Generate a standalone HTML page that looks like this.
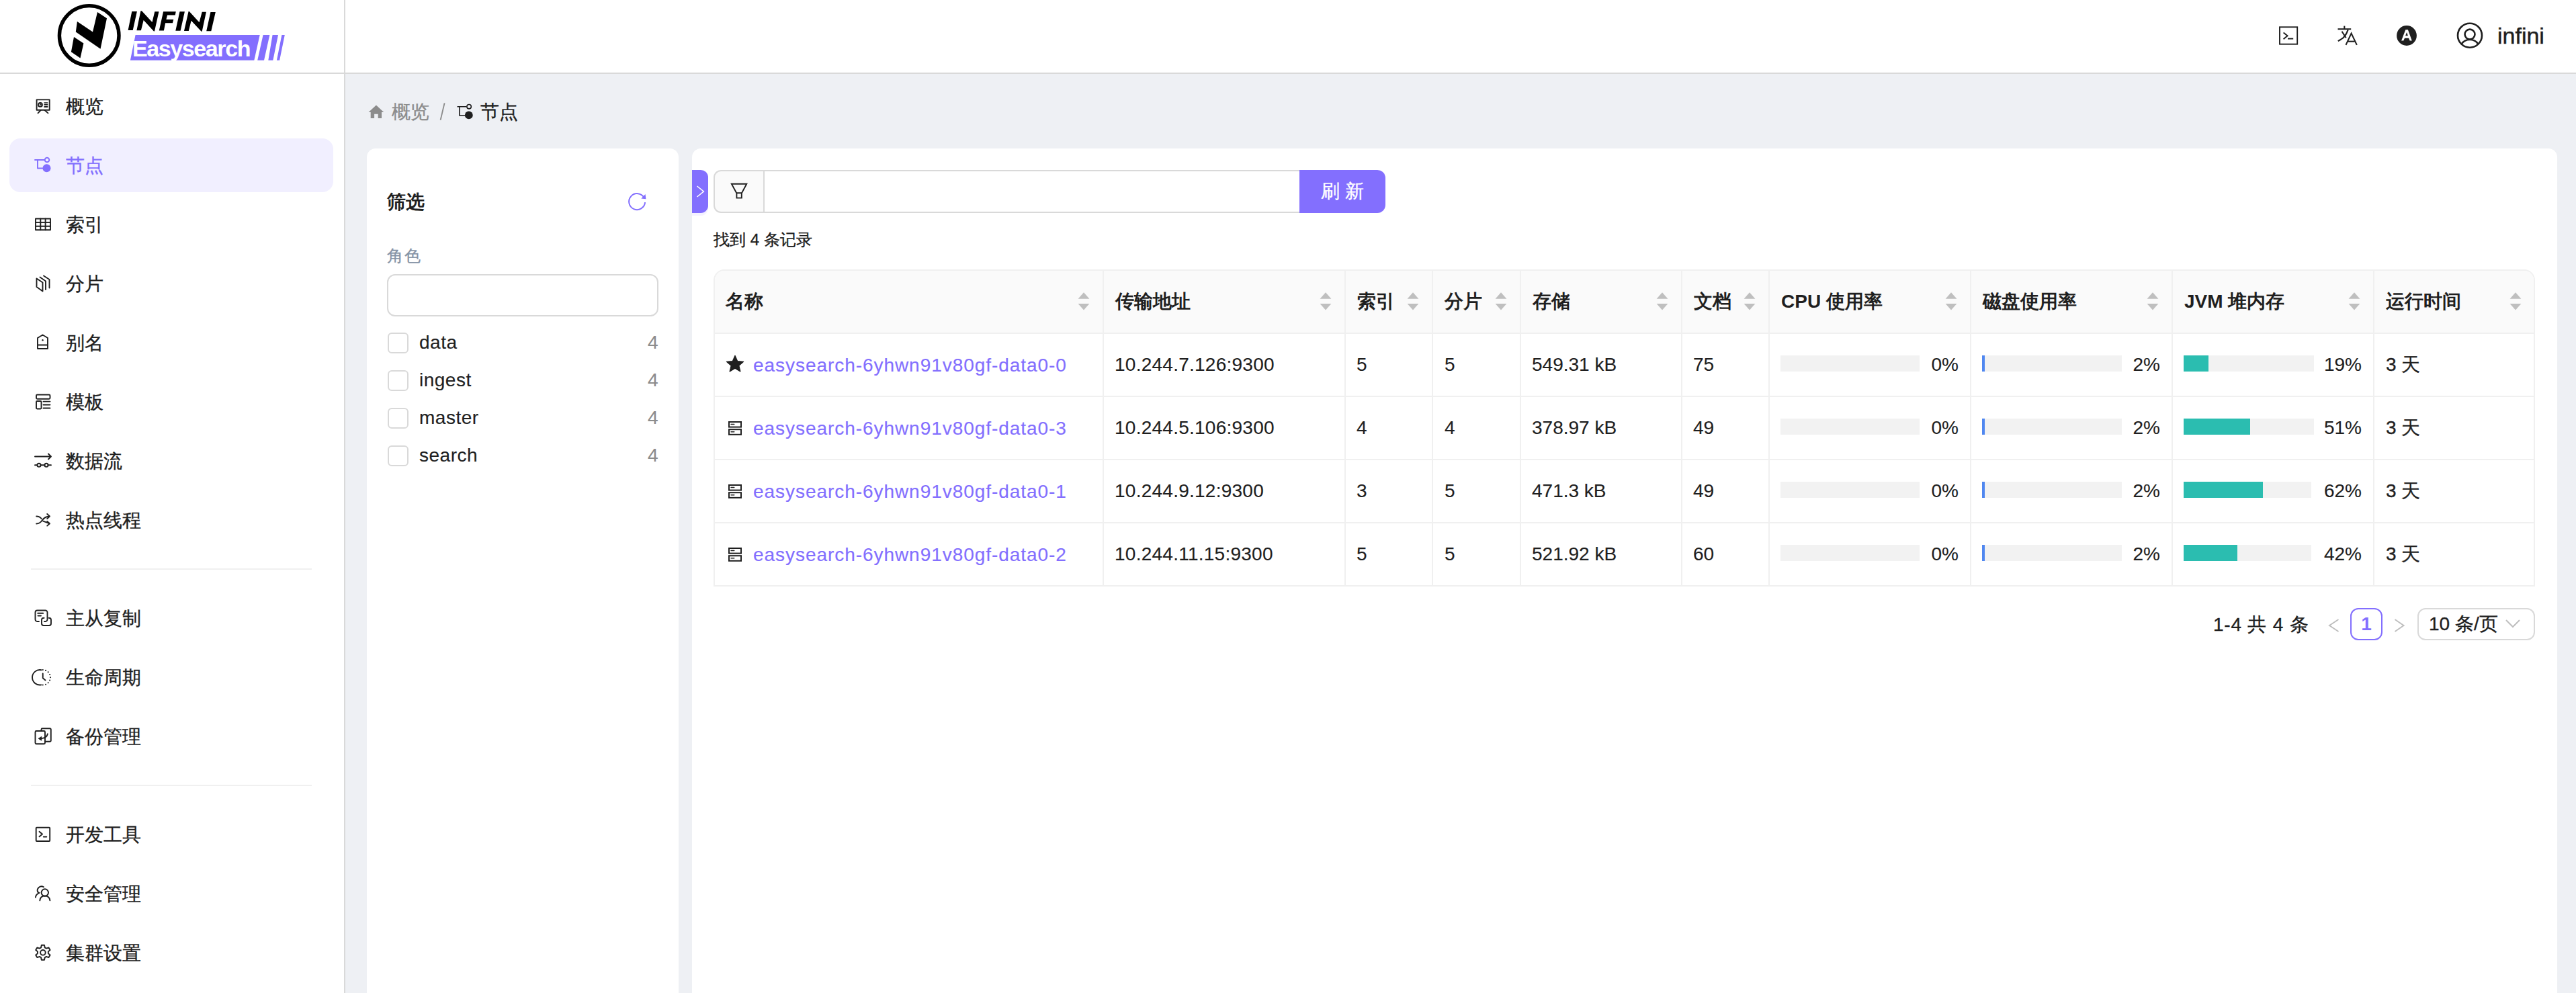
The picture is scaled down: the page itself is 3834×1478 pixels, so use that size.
<!DOCTYPE html><html><head><meta charset="utf-8"><style>
*{box-sizing:border-box;margin:0;padding:0}
html,body{width:3834px;height:1478px;overflow:hidden}
body{position:relative;background:#eef0f4;font-family:"Liberation Sans",sans-serif;color:#1f1f1f;font-size:28px}
.a{position:absolute;white-space:nowrap;-webkit-text-stroke:0.35px currentColor}
.l{-webkit-text-stroke:0.15px currentColor}
svg{position:absolute;overflow:visible}
</style></head><body>
<div class="a" style="left:0;top:0;width:3834px;height:108px;background:#fff"></div>
<div class="a" style="left:0;top:108px;width:3834px;height:2px;background:#d9d9d9"></div>
<div class="a" style="left:0;top:110px;width:512px;height:1368px;background:#fff"></div>
<div class="a" style="left:512px;top:0;width:2px;height:1478px;background:#d9d9d9"></div>
<svg style="left:0;top:0" width="514" height="108" viewBox="0 0 514 108">
<circle cx="132.7" cy="52.9" r="44.3" fill="none" stroke="#000" stroke-width="5.4"/>
<polygon fill="#000" points="114.9,31.9 138.0,47.5 145.0,17.9 159.0,27.2 149.5,72.7 112.8,47.5"/>
<polygon fill="#000" points="110.0,54.9 124.4,64.6 119.5,86.4 105.9,77.3"/>
<polygon fill="#836ffe" points="201.6,52 386.7,52 378.3,89.7 193.9,89.7"/>
<polygon fill="#836ffe" points="391.6,52 401.4,52 393.0,89.7 383.2,89.7"/>
<polygon fill="#836ffe" points="405.6,52 414.0,52 406.3,89.7 399.3,89.7"/>
<polygon fill="#836ffe" points="419.4,52 423.8,52 416.1,89.7 411.9,89.7"/>
</svg>
<svg style="left:0;top:0" width="514" height="108" viewBox="0 0 514 108"><g fill="#000">
<polygon points="190.6,44.9 197.7,44.9 203.9,17 196.3,17"/>
<polygon points="203.4,45.2 209.4,16.3 211,16.3 226.5,32.9 230.3,17.2 236.5,17.2 230,46.5 228.9,46.5 213.7,29.9 209.9,45.2"/>
<polygon points="236.8,45.4 243.1,17.2 261.8,17.2 260.7,22.6 249,22.6 247.4,29.1 258.3,29.1 256.9,34.3 246.1,34.3 243.9,45.4"/>
<polygon points="261.3,45.7 268.6,45.7 274.9,17.2 267.5,17.2"/>
<polygon points="274,46 280.6,16.9 281.7,16.9 296.6,33.2 300.7,17.7 306.9,17.7 300.7,46.8 299.6,46.8 284.6,30.75 280.8,46"/>
<polygon points="307.2,46.2 314.3,46.2 320.8,18 313.4,18"/>
</g></svg>
<div class="a" style="left:197px;top:52px;font-size:34px;line-height:40px;font-weight:bold;-webkit-text-stroke:0;color:#fff;letter-spacing:-1.4px">Easysearch</div>
<svg style="left:3380px;top:28px" width="420" height="52" viewBox="3380 28 420 52">
<rect x="3393" y="40.3" width="26.2" height="25.4" fill="none" stroke="#1f1f1f" stroke-width="1.9"/>
<polyline points="3398.6,48.5 3404.6,53.3 3398.6,58.2" fill="none" stroke="#1f1f1f" stroke-width="1.9"/>
<line x1="3405" y1="57.6" x2="3413.2" y2="57.6" stroke="#1f1f1f" stroke-width="1.9"/>
<g fill="none" stroke="#1f1f1f" stroke-width="2.1">
<line x1="3479.5" y1="43.3" x2="3499.2" y2="43.3"/>
<line x1="3489.3" y1="38.6" x2="3489.3" y2="43"/>
<path d="M3494.7,44.3 C3492.5,50 3490,56 3483.5,59 L3479.8,61.2"/>
<line x1="3485.5" y1="46.8" x2="3491.7" y2="56.3"/>
<polyline points="3491.5,66.9 3499.6,49.6 3507.8,66.9"/>
<line x1="3494.2" y1="61.7" x2="3504.8" y2="61.7"/>
</g>
<circle cx="3582" cy="53" r="14.9" fill="#1f1f1f"/>
<path d="M3580.3,44.3 L3583.9,44.3 L3589.8,60.6 L3586.6,60.6 L3585.1,56.8 L3579,56.8 L3577.3,60.6 L3574.1,60.6 Z M3582.1,48.1 L3583.9,53.3 L3580.1,53.3 Z" fill="#fff" fill-rule="evenodd"/>
<circle cx="3676" cy="52.7" r="18" fill="none" stroke="#1f1f1f" stroke-width="2.6"/>
<circle cx="3676" cy="51.1" r="7.5" fill="none" stroke="#1f1f1f" stroke-width="2.6"/>
<path d="M3663.6,65.4 C3667,60.5 3671,59 3676,59 C3681,59 3685,60.5 3688.3,65.4" fill="none" stroke="#1f1f1f" stroke-width="2.6"/>
</svg>
<div class="a" style="left:3717px;top:33px;font-size:34px;line-height:40px;color:#1f1f1f;-webkit-text-stroke:0.5px #1f1f1f">infini</div>
<svg style="left:44px;top:138px;color:#1f1f1f" width="40" height="40" viewBox="0 0 40 40"><rect x="10.6" y="10.4" width="19.1" height="15.3" fill="none" stroke="currentColor" stroke-width="1.9" stroke-linecap="round" stroke-linejoin="round"/><circle cx="16" cy="17.9" r="2.9" fill="none" stroke="currentColor" stroke-width="1.9" stroke-linecap="round" stroke-linejoin="round"/><path d="M16 15v2.9h2.9" fill="none" stroke="currentColor" stroke-width="1.5"/><path d="M22.2 15.1h4.4M22.2 17.9h4.4M22.2 21h4.4M16.6 26l-4.1 4.4M22.5 26l5 4.4" fill="none" stroke="currentColor" stroke-width="1.9" stroke-linecap="round" stroke-linejoin="round"/></svg>
<div class="a" style="left:98px;top:139px;line-height:40px;font-size:28px;color:#1f1f1f">概览</div>
<div class="a" style="left:14px;top:206px;width:482px;height:80px;border-radius:16px;background:#f1efff"></div>
<svg style="left:44px;top:222px;color:#836ffe" width="40" height="40" viewBox="0 0 40 40"><path d="M8 16h14.5M12 16v12.5h8" fill="none" stroke="currentColor" stroke-width="1.9" stroke-linecap="round" stroke-linejoin="round"/><circle cx="26" cy="16" r="3.3" fill="none" stroke="currentColor" stroke-width="1.9" stroke-linecap="round" stroke-linejoin="round"/><circle cx="25.5" cy="28.3" r="6" fill="currentColor"/></svg>
<div class="a" style="left:98px;top:227px;line-height:40px;font-size:28px;color:#836ffe">节点</div>
<svg style="left:44px;top:314px;color:#1f1f1f" width="40" height="40" viewBox="0 0 40 40"><rect x="9" y="11.5" width="22" height="16.8" fill="none" stroke="currentColor" stroke-width="1.9" stroke-linecap="round" stroke-linejoin="round"/><path d="M16.3 11.5v16.8M23.6 11.5v16.8M9 17.1h22M9 22.7h22" fill="none" stroke="currentColor" stroke-width="1.9" stroke-linecap="round" stroke-linejoin="round"/></svg>
<div class="a" style="left:98px;top:315px;line-height:40px;font-size:28px;color:#1f1f1f">索引</div>
<svg style="left:44px;top:402px;color:#1f1f1f" width="40" height="40" viewBox="0 0 40 40"><path d="M10.5 12.5l9 6v13l-9-6.5z M15.5 10.5l8.5 6v12.5 M21 8.5l8.5 5.5v12.5" fill="none" stroke="currentColor" stroke-width="1.9" stroke-linecap="round" stroke-linejoin="round"/></svg>
<div class="a" style="left:98px;top:403px;line-height:40px;font-size:28px;color:#1f1f1f">分片</div>
<svg style="left:44px;top:490px;color:#1f1f1f" width="40" height="40" viewBox="0 0 40 40"><path d="M12 13l7.5-4.5 7.5 4.5v16h-15z M12 23.5h15" fill="none" stroke="currentColor" stroke-width="1.9" stroke-linecap="round" stroke-linejoin="round"/><circle cx="19.5" cy="16.3" r="1.2" fill="currentColor"/></svg>
<div class="a" style="left:98px;top:491px;line-height:40px;font-size:28px;color:#1f1f1f">别名</div>
<svg style="left:44px;top:578px;color:#1f1f1f" width="40" height="40" viewBox="0 0 40 40"><rect x="10" y="9.5" width="20.5" height="6.3" rx="1.5" fill="none" stroke="currentColor" stroke-width="1.9" stroke-linecap="round" stroke-linejoin="round"/><rect x="10" y="19" width="7.5" height="11.5" rx="1.2" fill="none" stroke="currentColor" stroke-width="1.9" stroke-linecap="round" stroke-linejoin="round"/><path d="M20.5 19.6h10M20.5 24.5h10M20.5 29.5h10" fill="none" stroke="currentColor" stroke-width="1.9" stroke-linecap="round" stroke-linejoin="round"/></svg>
<div class="a" style="left:98px;top:579px;line-height:40px;font-size:28px;color:#1f1f1f">模板</div>
<svg style="left:44px;top:666px;color:#1f1f1f" width="40" height="40" viewBox="0 0 40 40"><path d="M8 13.5h24M28 9.5l4 4-4 4M8 26.3h3.4M16.6 26.3h5.8M27.6 26.3h4.4" fill="none" stroke="currentColor" stroke-width="1.9" stroke-linecap="round" stroke-linejoin="round"/><circle cx="14" cy="26.3" r="2.6" fill="none" stroke="currentColor" stroke-width="1.9" stroke-linecap="round" stroke-linejoin="round"/><circle cx="25" cy="26.3" r="2.6" fill="none" stroke="currentColor" stroke-width="1.9" stroke-linecap="round" stroke-linejoin="round"/></svg>
<div class="a" style="left:98px;top:667px;line-height:40px;font-size:28px;color:#1f1f1f">数据流</div>
<svg style="left:44px;top:754px;color:#1f1f1f" width="40" height="40" viewBox="0 0 40 40"><path d="M10.2 14.5c3 0 6 1.5 7.5 3.5M10.2 25.5c4 0 6.5-2 8.5-5 2.5-3.5 6.5-6 11.3-6M26.2 11l3.8 3.5-3.8 3.5M20.2 21.7l9.8 3.6M26.2 22l3.8 3.3-3.8 3.3" fill="none" stroke="currentColor" stroke-width="1.9" stroke-linecap="round" stroke-linejoin="round"/></svg>
<div class="a" style="left:98px;top:755px;line-height:40px;font-size:28px;color:#1f1f1f">热点线程</div>
<svg style="left:44px;top:900px;color:#1f1f1f" width="40" height="40" viewBox="0 0 40 40"><path d="M14 25H11.5a3 3 0 0 1-3-3V11.5a3 3 0 0 1 3-3h12a3 3 0 0 1 3 3V22a3 3 0 0 1-3 3h-1.5M12.2 12.8h8M12.5 16.5h4.5M21.6 19.7h-.6a3 3 0 0 0-3 3V28a3 3 0 0 0 3 3h8a3 3 0 0 0 3-3v-5.3a3 3 0 0 0-3-3h-.3" fill="none" stroke="currentColor" stroke-width="1.9" stroke-linecap="round" stroke-linejoin="round"/></svg>
<div class="a" style="left:98px;top:901px;line-height:40px;font-size:28px;color:#1f1f1f">主从复制</div>
<svg style="left:44px;top:988px;color:#1f1f1f" width="40" height="40" viewBox="0 0 40 40"><path d="M17.4 9.25A11.25 11.25 0 1 0 17.4 31.35" fill="none" stroke="currentColor" stroke-width="1.9" stroke-linecap="round" stroke-linejoin="round"/><circle cx="19.75" cy="9.05" r="1.05" fill="currentColor"/><circle cx="24.06" cy="9.91" r="1.05" fill="currentColor"/><circle cx="27.70" cy="12.35" r="1.05" fill="currentColor"/><circle cx="30.14" cy="15.99" r="1.05" fill="currentColor"/><circle cx="31.00" cy="20.30" r="1.05" fill="currentColor"/><circle cx="30.14" cy="24.61" r="1.05" fill="currentColor"/><circle cx="27.70" cy="28.25" r="1.05" fill="currentColor"/><circle cx="24.06" cy="30.69" r="1.05" fill="currentColor"/><circle cx="19.75" cy="31.55" r="1.05" fill="currentColor"/><path d="M19.75 14.5v6.7l3.8 3.3" fill="none" stroke="currentColor" stroke-width="1.9" stroke-linecap="round" stroke-linejoin="round"/></svg>
<div class="a" style="left:98px;top:989px;line-height:40px;font-size:28px;color:#1f1f1f">生命周期</div>
<svg style="left:44px;top:1076px;color:#1f1f1f" width="40" height="40" viewBox="0 0 40 40"><rect x="8.5" y="12" width="14.5" height="19.3" rx="1.5" fill="none" stroke="currentColor" stroke-width="1.9" stroke-linecap="round" stroke-linejoin="round"/><path d="M17.5 12V9.8a1.5 1.5 0 0 1 1.5-1.5h11.3a1.5 1.5 0 0 1 1.5 1.5v16.5a1.5 1.5 0 0 1-1.5 1.5H23M27 16.3c-1 4-3.5 6.3-9 6.8" fill="none" stroke="currentColor" stroke-width="1.9" stroke-linecap="round" stroke-linejoin="round"/><path d="M13.2 23.3l4.5-2.8v5.6z" fill="currentColor" stroke="currentColor" stroke-width="1"/></svg>
<div class="a" style="left:98px;top:1077px;line-height:40px;font-size:28px;color:#1f1f1f">备份管理</div>
<svg style="left:44px;top:1222px;color:#1f1f1f" width="40" height="40" viewBox="0 0 40 40"><rect x="9.7" y="9.7" width="20.5" height="20.3" rx="1" fill="none" stroke="currentColor" stroke-width="1.9" stroke-linecap="round" stroke-linejoin="round"/><path d="M14.5 15.8l4.5 3.8-4.5 3.7M20.8 23.5h4.5" fill="none" stroke="currentColor" stroke-width="1.9" stroke-linecap="round" stroke-linejoin="round"/></svg>
<div class="a" style="left:98px;top:1223px;line-height:40px;font-size:28px;color:#1f1f1f">开发工具</div>
<svg style="left:44px;top:1310px;color:#1f1f1f" width="40" height="40" viewBox="0 0 40 40"><path d="M21 10.3a6 6 0 0 0-8.8 7.3l2.3 1.5c-3.7 1.2-5.3 3.8-5.6 6.5" fill="none" stroke="currentColor" stroke-width="1.9" stroke-linecap="round" stroke-linejoin="round"/><circle cx="22.8" cy="18.5" r="5.2" fill="none" stroke="currentColor" stroke-width="1.9" stroke-linecap="round" stroke-linejoin="round"/><path d="M15.3 30.3c.5-4.5 3.5-6.8 7.5-6.8s7 2.3 7.6 6.8" fill="none" stroke="currentColor" stroke-width="1.9" stroke-linecap="round" stroke-linejoin="round"/></svg>
<div class="a" style="left:98px;top:1311px;line-height:40px;font-size:28px;color:#1f1f1f">安全管理</div>
<svg style="left:44px;top:1398px;color:#1f1f1f" width="40" height="40" viewBox="0 0 40 40"><path d="M17.8 8.7h4.2l.7 3.6 2.3 1.3 3.5-1.2 2.1 3.6-2.8 2.4v2.7l2.8 2.4-2.1 3.6-3.5-1.2-2.3 1.3-.7 3.6h-4.2l-.7-3.6-2.3-1.3-3.5 1.2-2.1-3.6 2.8-2.4v-2.7l-2.8-2.4 2.1-3.6 3.5 1.2 2.3-1.3z" fill="none" stroke="currentColor" stroke-width="1.9" stroke-linecap="round" stroke-linejoin="round"/><circle cx="19.9" cy="19.8" r="3.8" fill="none" stroke="currentColor" stroke-width="1.9" stroke-linecap="round" stroke-linejoin="round"/></svg>
<div class="a" style="left:98px;top:1399px;line-height:40px;font-size:28px;color:#1f1f1f">集群设置</div>
<div class="a" style="left:46px;top:846px;width:418px;height:2px;background:#f0f0f0"></div>
<div class="a" style="left:46px;top:1168px;width:418px;height:2px;background:#f0f0f0"></div>
<svg style="left:540px;top:140px" width="240" height="55" viewBox="540 140 240 55">
<path d="M548.6,167.1 L559.9,156.6 L571.2,167.1 L568,167.1 L568,175.9 L562.7,175.9 L562.7,169.8 L557.1,169.8 L557.1,175.9 L551.7,175.9 L551.7,167.1 Z" fill="#8c8c8c"/>
<path d="M680.5,158.8 H694.5 M683.8,158.8 V171.8 H692" fill="none" stroke="#1f1f1f" stroke-width="1.6"/>
<circle cx="698.1" cy="158.7" r="3.2" fill="none" stroke="#1f1f1f" stroke-width="1.6"/>
<circle cx="697.8" cy="171.4" r="5.9" fill="#1f1f1f"/>
</svg>
<div class="a" style="left:583px;top:147px;line-height:40px;font-size:28px;color:#8c8c8c">概览</div>
<svg style="left:640px;top:140px" width="40" height="50" viewBox="640 140 40 50"><line x1="655.6" y1="178.6" x2="661.6" y2="153.4" stroke="#8c8c8c" stroke-width="1.9"/></svg>
<div class="a" style="left:715px;top:147px;line-height:40px;font-size:28px;color:#1f1f1f">节点</div>
<div class="a" style="left:546px;top:221px;width:464px;height:1300px;background:#fff;border-radius:13px"></div>
<div class="a" style="left:576px;top:281px;line-height:40px;font-size:28px;font-weight:bold;-webkit-text-stroke:0;color:#1f1f1f">筛选</div>
<svg style="left:930px;top:283px;color:#836ffe" width="36" height="36" viewBox="930 283 36 36">
<path d="M958.6,294.2 A12,12 0 1 0 960.1,301.2" fill="none" stroke="currentColor" stroke-width="2"/>
<path d="M954.3,295.6 L961.4,296.3 L960.5,289 Z" fill="currentColor"/>
</svg>
<div class="a" style="left:576px;top:361px;line-height:40px;font-size:24px;color:#8593a6;letter-spacing:1.5px">角色</div>
<div class="a" style="left:576px;top:408px;width:404px;height:63px;border:2px solid #d9d9d9;border-radius:12px;background:#fff"></div>
<div class="a" style="left:577px;top:495px;width:31px;height:31px;border:2px solid #d9d9d9;border-radius:6px;background:#fff"></div>
<div class="a l" style="left:624px;top:490px;line-height:40px;font-size:28px;color:#1f1f1f;letter-spacing:0.5px">data</div>
<div class="a l" style="left:964px;top:490px;line-height:40px;font-size:28px;color:#8c8c8c">4</div>
<div class="a" style="left:577px;top:551px;width:31px;height:31px;border:2px solid #d9d9d9;border-radius:6px;background:#fff"></div>
<div class="a l" style="left:624px;top:546px;line-height:40px;font-size:28px;color:#1f1f1f;letter-spacing:0.5px">ingest</div>
<div class="a l" style="left:964px;top:546px;line-height:40px;font-size:28px;color:#8c8c8c">4</div>
<div class="a" style="left:577px;top:607px;width:31px;height:31px;border:2px solid #d9d9d9;border-radius:6px;background:#fff"></div>
<div class="a l" style="left:624px;top:602px;line-height:40px;font-size:28px;color:#1f1f1f;letter-spacing:0.5px">master</div>
<div class="a l" style="left:964px;top:602px;line-height:40px;font-size:28px;color:#8c8c8c">4</div>
<div class="a" style="left:577px;top:663px;width:31px;height:31px;border:2px solid #d9d9d9;border-radius:6px;background:#fff"></div>
<div class="a l" style="left:624px;top:658px;line-height:40px;font-size:28px;color:#1f1f1f;letter-spacing:0.5px">search</div>
<div class="a l" style="left:964px;top:658px;line-height:40px;font-size:28px;color:#8c8c8c">4</div>
<div class="a" style="left:1030px;top:221px;width:2776px;height:1300px;background:#fff;border-radius:13px"></div>
<div class="a" style="left:1030px;top:253px;width:24px;height:64px;background:#836ffe;border-radius:0 11px 11px 0;box-shadow:0 4px 0 #f4f2ff"></div>
<svg style="left:1030px;top:253px" width="24" height="64" viewBox="1030 253 24 64">
<polyline points="1037.5,277 1047.3,285 1037.5,293" fill="none" stroke="#fff" stroke-width="1.6"/></svg>
<div class="a" style="left:1062px;top:253px;width:76px;height:64px;border:2px solid #d9d9d9;border-right:0;border-radius:11px 0 0 11px;background:#fafafa"></div>
<svg style="left:1080px;top:265px" width="40" height="40" viewBox="1080 265 40 40">
<path d="M1088.8,273.8 H1111.3 L1104,287.3 H1096.2 Z M1096.4,287.3 V294.6 H1103.8 V287.3" fill="none" stroke="#1f1f1f" stroke-width="1.9" stroke-linejoin="miter"/></svg>
<div class="a" style="left:1136px;top:253px;width:800px;height:64px;border:2px solid #d9d9d9;border-left:0;border-right:0;background:#fff"></div>
<div class="a" style="left:1136px;top:253px;width:2px;height:64px;background:#d9d9d9"></div>
<div class="a" style="left:1934px;top:253px;width:128px;height:64px;background:#836ffe;border-radius:0 12px 12px 0"></div>
<div class="a" style="left:1966px;top:265px;line-height:40px;font-size:28px;color:#fff;letter-spacing:8px">刷新</div>
<div class="a" style="left:1062px;top:337px;line-height:40px;font-size:24px;color:#1f1f1f">找到 4 条记录</div>
<div class="a" style="left:1062px;top:401px;width:2711px;height:472px;border:2px solid #f0f0f0;border-bottom-width:2px;border-radius:16px 16px 0 0;background:#fff;overflow:hidden"><div style="position:absolute;left:0;top:0;width:100%;height:93px;background:#fafafa"></div></div>
<div class="a" style="left:1064px;top:495px;width:2707px;height:2px;background:#f0f0f0"></div>
<div class="a" style="left:1064px;top:589px;width:2707px;height:2px;background:#f0f0f0"></div>
<div class="a" style="left:1064px;top:683px;width:2707px;height:2px;background:#f0f0f0"></div>
<div class="a" style="left:1064px;top:777px;width:2707px;height:2px;background:#f0f0f0"></div>
<div class="a" style="left:1641px;top:403px;width:2px;height:468px;background:#f0f0f0"></div>
<div class="a" style="left:2001px;top:403px;width:2px;height:468px;background:#f0f0f0"></div>
<div class="a" style="left:2131px;top:403px;width:2px;height:468px;background:#f0f0f0"></div>
<div class="a" style="left:2262px;top:403px;width:2px;height:468px;background:#f0f0f0"></div>
<div class="a" style="left:2502px;top:403px;width:2px;height:468px;background:#f0f0f0"></div>
<div class="a" style="left:2632px;top:403px;width:2px;height:468px;background:#f0f0f0"></div>
<div class="a" style="left:2932px;top:403px;width:2px;height:468px;background:#f0f0f0"></div>
<div class="a" style="left:3232px;top:403px;width:2px;height:468px;background:#f0f0f0"></div>
<div class="a" style="left:3532px;top:403px;width:2px;height:468px;background:#f0f0f0"></div>
<div class="a" style="left:1080px;top:429px;line-height:40px;font-size:28px;font-weight:bold;-webkit-text-stroke:0;color:#1f1f1f">名称</div>
<svg style="left:1603px;top:430px" width="20" height="36" viewBox="0 0 20 36"><path d="M1.6,14.8 L10,5.2 L18.4,14.8 Z M1.6,22 L10,31.6 L18.4,22 Z" fill="#bfbfbf"/></svg>
<div class="a" style="left:1660px;top:429px;line-height:40px;font-size:28px;font-weight:bold;-webkit-text-stroke:0;color:#1f1f1f">传输地址</div>
<svg style="left:1963px;top:430px" width="20" height="36" viewBox="0 0 20 36"><path d="M1.6,14.8 L10,5.2 L18.4,14.8 Z M1.6,22 L10,31.6 L18.4,22 Z" fill="#bfbfbf"/></svg>
<div class="a" style="left:2020px;top:429px;line-height:40px;font-size:28px;font-weight:bold;-webkit-text-stroke:0;color:#1f1f1f">索引</div>
<svg style="left:2093px;top:430px" width="20" height="36" viewBox="0 0 20 36"><path d="M1.6,14.8 L10,5.2 L18.4,14.8 Z M1.6,22 L10,31.6 L18.4,22 Z" fill="#bfbfbf"/></svg>
<div class="a" style="left:2150px;top:429px;line-height:40px;font-size:28px;font-weight:bold;-webkit-text-stroke:0;color:#1f1f1f">分片</div>
<svg style="left:2224px;top:430px" width="20" height="36" viewBox="0 0 20 36"><path d="M1.6,14.8 L10,5.2 L18.4,14.8 Z M1.6,22 L10,31.6 L18.4,22 Z" fill="#bfbfbf"/></svg>
<div class="a" style="left:2281px;top:429px;line-height:40px;font-size:28px;font-weight:bold;-webkit-text-stroke:0;color:#1f1f1f">存储</div>
<svg style="left:2464px;top:430px" width="20" height="36" viewBox="0 0 20 36"><path d="M1.6,14.8 L10,5.2 L18.4,14.8 Z M1.6,22 L10,31.6 L18.4,22 Z" fill="#bfbfbf"/></svg>
<div class="a" style="left:2521px;top:429px;line-height:40px;font-size:28px;font-weight:bold;-webkit-text-stroke:0;color:#1f1f1f">文档</div>
<svg style="left:2594px;top:430px" width="20" height="36" viewBox="0 0 20 36"><path d="M1.6,14.8 L10,5.2 L18.4,14.8 Z M1.6,22 L10,31.6 L18.4,22 Z" fill="#bfbfbf"/></svg>
<div class="a" style="left:2651px;top:429px;line-height:40px;font-size:28px;font-weight:bold;-webkit-text-stroke:0;color:#1f1f1f">CPU 使用率</div>
<svg style="left:2894px;top:430px" width="20" height="36" viewBox="0 0 20 36"><path d="M1.6,14.8 L10,5.2 L18.4,14.8 Z M1.6,22 L10,31.6 L18.4,22 Z" fill="#bfbfbf"/></svg>
<div class="a" style="left:2951px;top:429px;line-height:40px;font-size:28px;font-weight:bold;-webkit-text-stroke:0;color:#1f1f1f">磁盘使用率</div>
<svg style="left:3194px;top:430px" width="20" height="36" viewBox="0 0 20 36"><path d="M1.6,14.8 L10,5.2 L18.4,14.8 Z M1.6,22 L10,31.6 L18.4,22 Z" fill="#bfbfbf"/></svg>
<div class="a" style="left:3251px;top:429px;line-height:40px;font-size:28px;font-weight:bold;-webkit-text-stroke:0;color:#1f1f1f">JVM 堆内存</div>
<svg style="left:3494px;top:430px" width="20" height="36" viewBox="0 0 20 36"><path d="M1.6,14.8 L10,5.2 L18.4,14.8 Z M1.6,22 L10,31.6 L18.4,22 Z" fill="#bfbfbf"/></svg>
<div class="a" style="left:3551px;top:429px;line-height:40px;font-size:28px;font-weight:bold;-webkit-text-stroke:0;color:#1f1f1f">运行时间</div>
<svg style="left:3734px;top:430px" width="20" height="36" viewBox="0 0 20 36"><path d="M1.6,14.8 L10,5.2 L18.4,14.8 Z M1.6,22 L10,31.6 L18.4,22 Z" fill="#bfbfbf"/></svg>
<svg style="left:1074px;top:523px" width="40" height="40" viewBox="0 0 40 40"><path d="M20,6.2 L23.6,14.6 L32.6,15.3 L25.8,21.2 L27.9,30 L20,25.3 L12.1,30 L14.2,21.2 L7.4,15.3 L16.4,14.6 Z" fill="#1f1f1f" stroke="#1f1f1f" stroke-width="1.2" stroke-linejoin="round"/></svg>
<div class="a l" style="left:1121px;top:524px;line-height:40px;font-size:28px;letter-spacing:0.95px;color:#836ffe">easysearch-6yhwn91v80gf-data0-0</div>
<div class="a l" style="left:1659px;top:523px;line-height:40px;font-size:28px;letter-spacing:0.25px">10.244.7.126:9300</div>
<div class="a l" style="left:2019px;top:523px;line-height:40px;font-size:28px">5</div>
<div class="a l" style="left:2150px;top:523px;line-height:40px;font-size:28px">5</div>
<div class="a l" style="left:2280px;top:523px;line-height:40px;font-size:28px">549.31 kB</div>
<div class="a l" style="left:2520px;top:523px;line-height:40px;font-size:28px">75</div>
<div class="a" style="left:2650px;top:529px;width:207px;height:24px;background:#f2f2f2"><div style="width:0.0px;height:24px;background:#5087f0"></div></div>
<div class="a l" style="left:2835px;top:523px;line-height:40px;font-size:28px;width:80px;text-align:right">0%</div>
<div class="a" style="left:2950px;top:529px;width:208px;height:24px;background:#f2f2f2"><div style="width:4.2px;height:24px;background:#5087f0"></div></div>
<div class="a l" style="left:3135px;top:523px;line-height:40px;font-size:28px;width:80px;text-align:right">2%</div>
<div class="a" style="left:3250px;top:529px;width:194px;height:24px;background:#f2f2f2"><div style="width:36.9px;height:24px;background:#2bbdb0"></div></div>
<div class="a l" style="left:3435px;top:523px;line-height:40px;font-size:28px;width:80px;text-align:right">19%</div>
<div class="a" style="left:3551px;top:523px;line-height:40px;font-size:28px">3 天</div>
<svg style="left:1074px;top:617px" width="40" height="40" viewBox="0 0 40 40"><g fill="none" stroke="#1f1f1f" stroke-width="2"><rect x="11" y="11" width="18" height="7.6"/><rect x="11" y="22.2" width="18" height="7.6"/></g><path d="M14,14.5 H18.8 M14,25.8 H18.8" stroke="#1f1f1f" stroke-width="1.4" stroke-linecap="round"/></svg>
<div class="a l" style="left:1121px;top:618px;line-height:40px;font-size:28px;letter-spacing:0.95px;color:#836ffe">easysearch-6yhwn91v80gf-data0-3</div>
<div class="a l" style="left:1659px;top:617px;line-height:40px;font-size:28px;letter-spacing:0.25px">10.244.5.106:9300</div>
<div class="a l" style="left:2019px;top:617px;line-height:40px;font-size:28px">4</div>
<div class="a l" style="left:2150px;top:617px;line-height:40px;font-size:28px">4</div>
<div class="a l" style="left:2280px;top:617px;line-height:40px;font-size:28px">378.97 kB</div>
<div class="a l" style="left:2520px;top:617px;line-height:40px;font-size:28px">49</div>
<div class="a" style="left:2650px;top:623px;width:207px;height:24px;background:#f2f2f2"><div style="width:0.0px;height:24px;background:#5087f0"></div></div>
<div class="a l" style="left:2835px;top:617px;line-height:40px;font-size:28px;width:80px;text-align:right">0%</div>
<div class="a" style="left:2950px;top:623px;width:208px;height:24px;background:#f2f2f2"><div style="width:4.2px;height:24px;background:#5087f0"></div></div>
<div class="a l" style="left:3135px;top:617px;line-height:40px;font-size:28px;width:80px;text-align:right">2%</div>
<div class="a" style="left:3250px;top:623px;width:194px;height:24px;background:#f2f2f2"><div style="width:99.2px;height:24px;background:#2bbdb0"></div></div>
<div class="a l" style="left:3435px;top:617px;line-height:40px;font-size:28px;width:80px;text-align:right">51%</div>
<div class="a" style="left:3551px;top:617px;line-height:40px;font-size:28px">3 天</div>
<svg style="left:1074px;top:711px" width="40" height="40" viewBox="0 0 40 40"><g fill="none" stroke="#1f1f1f" stroke-width="2"><rect x="11" y="11" width="18" height="7.6"/><rect x="11" y="22.2" width="18" height="7.6"/></g><path d="M14,14.5 H18.8 M14,25.8 H18.8" stroke="#1f1f1f" stroke-width="1.4" stroke-linecap="round"/></svg>
<div class="a l" style="left:1121px;top:712px;line-height:40px;font-size:28px;letter-spacing:0.95px;color:#836ffe">easysearch-6yhwn91v80gf-data0-1</div>
<div class="a l" style="left:1659px;top:711px;line-height:40px;font-size:28px;letter-spacing:0.25px">10.244.9.12:9300</div>
<div class="a l" style="left:2019px;top:711px;line-height:40px;font-size:28px">3</div>
<div class="a l" style="left:2150px;top:711px;line-height:40px;font-size:28px">5</div>
<div class="a l" style="left:2280px;top:711px;line-height:40px;font-size:28px">471.3 kB</div>
<div class="a l" style="left:2520px;top:711px;line-height:40px;font-size:28px">49</div>
<div class="a" style="left:2650px;top:717px;width:207px;height:24px;background:#f2f2f2"><div style="width:0.0px;height:24px;background:#5087f0"></div></div>
<div class="a l" style="left:2835px;top:711px;line-height:40px;font-size:28px;width:80px;text-align:right">0%</div>
<div class="a" style="left:2950px;top:717px;width:208px;height:24px;background:#f2f2f2"><div style="width:4.2px;height:24px;background:#5087f0"></div></div>
<div class="a l" style="left:3135px;top:711px;line-height:40px;font-size:28px;width:80px;text-align:right">2%</div>
<div class="a" style="left:3250px;top:717px;width:190px;height:24px;background:#f2f2f2"><div style="width:117.8px;height:24px;background:#2bbdb0"></div></div>
<div class="a l" style="left:3435px;top:711px;line-height:40px;font-size:28px;width:80px;text-align:right">62%</div>
<div class="a" style="left:3551px;top:711px;line-height:40px;font-size:28px">3 天</div>
<svg style="left:1074px;top:805px" width="40" height="40" viewBox="0 0 40 40"><g fill="none" stroke="#1f1f1f" stroke-width="2"><rect x="11" y="11" width="18" height="7.6"/><rect x="11" y="22.2" width="18" height="7.6"/></g><path d="M14,14.5 H18.8 M14,25.8 H18.8" stroke="#1f1f1f" stroke-width="1.4" stroke-linecap="round"/></svg>
<div class="a l" style="left:1121px;top:806px;line-height:40px;font-size:28px;letter-spacing:0.95px;color:#836ffe">easysearch-6yhwn91v80gf-data0-2</div>
<div class="a l" style="left:1659px;top:805px;line-height:40px;font-size:28px;letter-spacing:0.25px">10.244.11.15:9300</div>
<div class="a l" style="left:2019px;top:805px;line-height:40px;font-size:28px">5</div>
<div class="a l" style="left:2150px;top:805px;line-height:40px;font-size:28px">5</div>
<div class="a l" style="left:2280px;top:805px;line-height:40px;font-size:28px">521.92 kB</div>
<div class="a l" style="left:2520px;top:805px;line-height:40px;font-size:28px">60</div>
<div class="a" style="left:2650px;top:811px;width:207px;height:24px;background:#f2f2f2"><div style="width:0.0px;height:24px;background:#5087f0"></div></div>
<div class="a l" style="left:2835px;top:805px;line-height:40px;font-size:28px;width:80px;text-align:right">0%</div>
<div class="a" style="left:2950px;top:811px;width:208px;height:24px;background:#f2f2f2"><div style="width:4.2px;height:24px;background:#5087f0"></div></div>
<div class="a l" style="left:3135px;top:805px;line-height:40px;font-size:28px;width:80px;text-align:right">2%</div>
<div class="a" style="left:3250px;top:811px;width:190px;height:24px;background:#f2f2f2"><div style="width:79.8px;height:24px;background:#2bbdb0"></div></div>
<div class="a l" style="left:3435px;top:805px;line-height:40px;font-size:28px;width:80px;text-align:right">42%</div>
<div class="a" style="left:3551px;top:805px;line-height:40px;font-size:28px">3 天</div>
<div class="a" style="left:3294px;top:910px;line-height:40px;font-size:28px;letter-spacing:0.8px">1-4 共 4 条</div>
<svg style="left:3455px;top:905px" width="140" height="48" viewBox="3455 905 140 48">
<polyline points="3480.5,922 3467,931 3480.5,940" fill="none" stroke="#bfbfbf" stroke-width="2"/>
<polyline points="3564.5,922 3577.5,931 3564.5,940" fill="none" stroke="#bfbfbf" stroke-width="2"/>
</svg>
<div class="a" style="left:3498px;top:905px;width:48px;height:48px;border:2px solid #836ffe;border-radius:12px;text-align:center;line-height:44px;font-size:28px;font-weight:bold;-webkit-text-stroke:0;color:#836ffe">1</div>
<div class="a" style="left:3598px;top:905px;width:175px;height:48px;border:2px solid #d9d9d9;border-radius:12px;background:#fff"></div>
<div class="a" style="left:3615px;top:909px;line-height:40px;font-size:28px">10 条/页</div>
<svg style="left:3720px;top:910px" width="40" height="40" viewBox="3720 910 40 40">
<polyline points="3730,923 3740,933 3750,923" fill="none" stroke="#bfbfbf" stroke-width="2"/></svg>
</body></html>
